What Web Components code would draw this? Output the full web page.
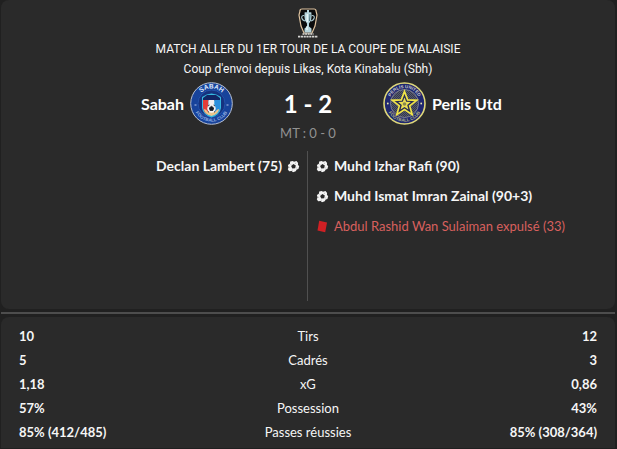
<!DOCTYPE html>
<html lang="fr">
<head>
<meta charset="utf-8">
<title>Sabah 1 - 2 Perlis Utd</title>
<style>
body { margin: 0; background: #202020; color: #f6f6f6; font: 13px/20px Lato, "Liberation Sans", sans-serif; }
</style>
</head>
<body>
<match-page>
  <match-card>
    <match-header competition="MATCH ALLER DU 1ER TOUR DE LA COUPE DE MALAISIE" venue="Coup d'envoi depuis Likas, Kota Kinabalu (Sbh)"></match-header>
    <match-score home="Sabah" away="Perlis Utd" score="1 - 2" half="MT : 0 - 0">
      <sabah-crest slot="home"></sabah-crest>
      <perlis-crest slot="away"></perlis-crest>
    </match-score>
    <match-events>
      <match-event slot="home" type="goal" side="home">Declan Lambert (75)</match-event>
      <match-event slot="away" type="goal">Muhd Izhar Rafi (90)</match-event>
      <match-event slot="away" type="goal">Muhd Ismat Imran Zainal (90+3)</match-event>
      <match-event slot="away" type="red">Abdul Rashid Wan Sulaiman expulsé (33)</match-event>
    </match-events>
  </match-card>
  <match-stats></match-stats>
</match-page>

<script>
function define(name, markup, setup) {
  const template = document.createElement('template');
  template.innerHTML = markup;
  customElements.define(name, class extends HTMLElement {
    constructor() {
      super();
      this.attachShadow({ mode: 'open' }).append(template.content.cloneNode(true));
    }
    connectedCallback() {
      if (setup && !this.ready) { this.ready = true; setup(this, this.shadowRoot); }
    }
  });
}

function fill(host, root) {
  root.querySelectorAll('[data-text]').forEach(el => { el.textContent = host.getAttribute(el.dataset.text); });
}

define('match-page', `
  <style>
    :host { display: block; padding: 0 2px 1px 1px; }
  </style>
  <slot></slot>`);

define('match-card', `
  <style>
    :host { display: flex; flex-direction: column; background: #2a2a2a; border-radius: 8px; padding: 8px 0; }
  </style>
  <slot></slot>`);

define('match-header', `
  <style>
    :host { display: flex; flex-direction: column; align-items: center; text-align: center; font-family: Roboto, "Liberation Sans", sans-serif; }
    h1, p { margin: 0; font-size: 12px; line-height: 20px; font-weight: 400; }
    svg { display: block; width: 22px; height: 30px; margin-bottom: 1px; }
  </style>
  <svg viewBox="0 0 22 30" role="img" aria-label="Coupe de Malaisie">
    <path d="M5 1h12q2 0 2 2l1 4-2 11-3 7H7l-3-7L2 7l1-4q0-2 2-2z" fill="#0a0b0c" stroke="#e0c4a0" stroke-width="1.2"/>
    <path d="M7.500 5h7M7 7.500C3.500 7 4 12 8 13M15 7.500c3.500-.5 3 4.500-1 5.500" fill="none" stroke="#a6c4cc" stroke-width="1.100"/>
    <path d="M10 2h2v2.500h2l.7 3-.7 5-2 3v3l2.500 2v4h-7v-4l2.500-2v-3l-2-3-.7-5 .7-3h2z" fill="#b5d4dc"/>
    <path d="M10.200 6v8M10 18v4" stroke="#f5ffff" stroke-width="1.100"/>
    <path d="M13 6l-.5 7" stroke="#527780"/>
    <path d="M5.500 26h11" stroke="#deded9" stroke-width="1.600" stroke-dasharray="2 .6"/>
    <path d="M1 28.600h20" stroke="#d5d5d3" stroke-width="1.900" stroke-dasharray="2.200 .6"/>
  </svg>
  <h1 data-text="competition"></h1>
  <p data-text="venue"></p>`, fill);

define('match-score', `
  <style>
    :host { display: grid; grid-template-columns: 1fr 150px 1fr; align-items: center; padding-top: 3px; }
    .team { display: flex; align-items: center; gap: 6px; font-size: 16px; font-weight: 700; color: #fff; }
    .home { justify-content: flex-end; }
    .score { text-align: center; font-size: 24px; line-height: 30px; font-weight: 700; color: #fff; }
    .half { grid-column: 1 / -1; text-align: center; line-height: 16px; color: #929292; }
  </style>
  <div class="team home"><span data-text="home"></span><slot name="home"></slot></div>
  <div class="score" data-text="score"></div>
  <div class="team"><slot name="away"></slot><span data-text="away"></span></div>
  <div class="half" data-text="half"></div>`, fill);

const crestStyle = `
  <style>
    :host { display: block; flex: none; }
    svg { display: block; width: 43px; height: 43px; }
    text { font-family: "Liberation Sans", sans-serif; font-weight: 700; }
  </style>`;

define('sabah-crest', crestStyle + `
  <svg viewBox="0 0 43 43" role="img" aria-label="Sabah Football Club">
    <defs>
      <path id="top" d="M6.500 21.500a15 15 0 0 1 30 0"/>
      <path id="low" d="M3.300 21.500a18.200 18.200 0 0 0 36.400 0"/>
    </defs>
    <circle cx="21.500" cy="21.500" r="20.800" fill="#17439b" stroke="#b6bfd0" stroke-width="1"/>
    <circle cx="21.500" cy="21.500" r="13.500" fill="#16327f" stroke="#2453aa"/>
    <path d="M12 15q9.500-7 19 0v11q-1 7-9.500 9.500Q13 33 12 26z" fill="#35b9df"/>
    <path d="M13 16l4-3h9l4 3v3H13z" fill="#122565"/>
    <path d="M13 18h5.500v15Q13 30 13 25z" fill="#e63d37"/>
    <path d="M18.500 18h6v15h-6z" fill="#eeeef2"/>
    <path d="M24.500 18H30v7q0 5-5.500 8z" fill="#2b8fdd"/>
    <path d="M14 27q2 0 4 3h7q2-3 4-3 0 5-7.500 7Q14 32 14 27z" fill="#ecc68d"/>
    <circle cx="21.500" cy="26.500" r="4.200" fill="#f4f4f4"/>
    <path d="M21.500 24.300l2.200 1.600-.8 2.600h-2.800l-.8-2.600zM18 24l1.500-1M25 24l-1.500-1M18 29.500l1 .8M25 29.500l-1 .8" fill="#151b27" stroke="#151b27" stroke-width=".8"/>
    <text font-size="6.500" fill="#dfe9fb" text-anchor="middle"><textPath href="#top" startOffset="50%">SABAH</textPath></text>
    <text font-size="4.500" fill="#92aee0" text-anchor="middle"><textPath href="#low" startOffset="50%">FOOTBALL CLUB</textPath></text>
    <path d="M4.500 23h2M36.500 23h2" stroke="#b7c7ec"/>
  </svg>`);

define('perlis-crest', crestStyle + `
  <svg viewBox="0 0 43 43" role="img" aria-label="Perlis United Football Club">
    <defs>
      <path id="top" d="M6 21.500a15.500 15.500 0 0 1 31 0"/>
      <path id="low" d="M3.300 21.500a18.200 18.200 0 0 0 36.400 0"/>
      <pattern id="mesh" width="2" height="2" patternUnits="userSpaceOnUse"><path d="M0 0h2v2H0z" fill="#34384e"/><path d="M0 0h1v1H0zM1 1h1v1H1z" fill="#55596b"/></pattern>
    </defs>
    <circle cx="21.500" cy="21.500" r="20.500" fill="#20286f" stroke="#ded77a" stroke-width="1.600"/>
    <circle cx="21.500" cy="21.500" r="14" fill="url(#mesh)" stroke="#8b8e9f" stroke-width=".8"/>
    <path d="M21.500 9.500l3.200 8.400 9 .4-7 5.600 2.500 8.700-7.700-5-7.700 5 2.500-8.700-7-5.600 9-.4z" fill="#292d52" stroke="#f1e448" stroke-width="1.700"/>
    <path d="M21.500 15.500l1.700 4.300 4.600.2-3.600 2.900 1.200 4.500-3.900-2.500-3.900 2.500 1.200-4.500-3.600-2.900 4.600-.2z" fill="#ece052"/>
    <circle cx="21.500" cy="22" r="1.800" fill="#8a8752"/>
    <text font-size="4.500" fill="#c5c7c8" text-anchor="middle"><textPath href="#top" startOffset="50%">PERLIS UNITED</textPath></text>
    <text font-size="4.500" fill="#abae86" text-anchor="middle"><textPath href="#low" startOffset="50%">FOOTBALL CLUB</textPath></text>
    <circle cx="4.800" cy="21.500" r=".9" fill="#e7e7b0"/><circle cx="38.200" cy="21.500" r=".9" fill="#e7e7b0"/>
  </svg>`);

define('match-events', `
  <style>
    :host { display: grid; grid-template-columns: 1fr 1fr; min-height: 150px; padding-top: 10px; }
    .home { border-right: 1px solid #505050; padding-right: 7px; }
    .away { padding-left: 8px; }
  </style>
  <div class="home"><slot name="home"></slot></div>
  <div class="away"><slot name="away"></slot></div>`);

define('match-event', `
  <style>
    :host { display: flex; align-items: center; gap: 5px; font-size: 14px; line-height: 30px; font-weight: 700; }
    :host([side="home"]) { flex-direction: row-reverse; }
    :host([type="red"]) { font-size: 13px; font-weight: 400; color: #d8605e; }
    svg { width: 13px; height: 13px; flex: none; display: none; }
    :host([type="goal"]) .goal, :host([type="red"]) .red { display: block; }
  </style>
  <svg class="goal" viewBox="0 0 13 13" aria-hidden="true">
    <path d="M3.200 1.500L5.800 1l1.200.7L9.500 1l1.600 2-.2 1.800 1.300 1.400-.8 2.700-1.700.7-1 1.700-2.700.9-1.300-1.100-2.600.1L.8 9.300l.8-1.700L.9 5l2-1.200z" fill="#f4f4f4"/>
    <path d="M6.400 4.100l2.400 1.500-.6 2.600-2.900.4-1.200-2.500z" fill="#282828"/>
    <path d="M3.200 3.800l1 1M8.800 2.700l-.5 1.200M10.200 8.200l-1-.4M5.200 10.800l.1-1.100M2 7.500l1-.4" stroke="#999" stroke-width=".6"/>
  </svg>
  <svg class="red" viewBox="0 0 13 13" aria-hidden="true"><path d="M3.200.8l7.800 1.600-1.800 9.800-7.700-1.600z" fill="#d02024"/></svg>
  <span><slot></slot></span>`);

define('match-stats', `
  <style>
    :host { display: block; border-top: 2px solid #4d4d4d; margin-top: 3px; padding-top: 3px; }
    .card { background: #2a2a2a; border-radius: 8px 8px 0 0; padding: 7px 18px 4px; }
    table { width: 100%; border-collapse: collapse; table-layout: fixed; }
    td, th { padding: 0; height: 24px; line-height: 24px; font-size: 13px; font-weight: 400; text-align: center; }
    td { font-weight: 700; }
    td:first-child { text-align: left; }
    td:last-child { text-align: right; }
  </style>
  <div class="card"><table aria-label="Statistiques du match"><tbody></tbody></table></div>`, (host, root) => {
  const body = root.querySelector('tbody');
  [
    ['10', 'Tirs', '12'],
    ['5', 'Cadrés', '3'],
    ['1,18', 'xG', '0,86'],
    ['57%', 'Possession', '43%'],
    ['85% (412/485)', 'Passes réussies', '85% (308/364)']
  ].forEach(([home, label, away]) => {
    const row = body.insertRow();
    row.insertCell().textContent = home;
    const heading = document.createElement('th');
    heading.scope = 'row';
    heading.textContent = label;
    row.append(heading);
    row.insertCell().textContent = away;
  });
});
</script>
</body>
</html>
